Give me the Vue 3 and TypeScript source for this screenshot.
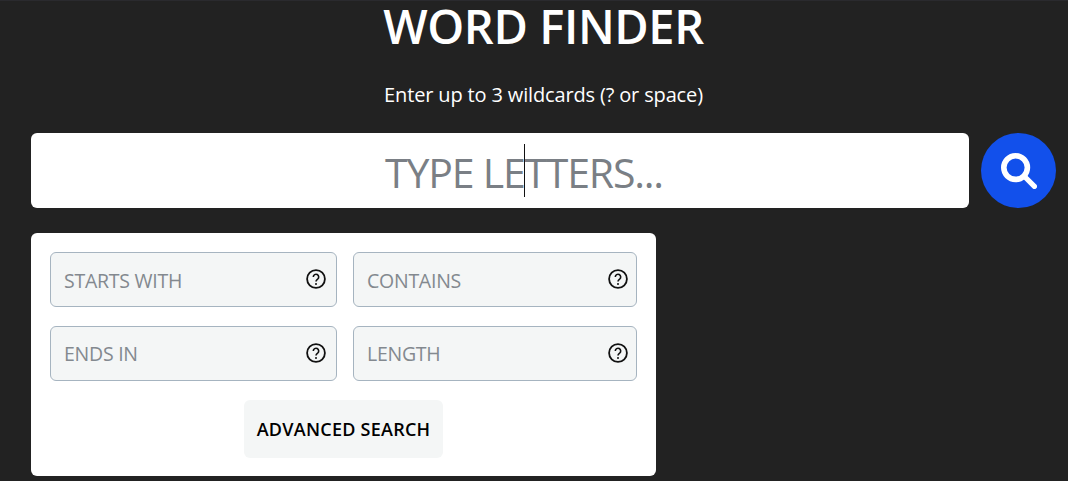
<script setup lang="ts">
const fields = ['STARTS WITH', 'CONTAINS', 'ENDS IN', 'LENGTH']
</script>

<template>
  <main class="page">
    <h1 class="title">WORD FINDER</h1>
    <p class="hint">Enter up to 3 wildcards (? or space)</p>

    <div class="search-row">
      <div class="search-box">
        <input class="search-input" type="text" placeholder="TYPE LETTERS..." />
        <span class="caret"></span>
      </div>
      <button class="search-btn" type="button" aria-label="Search">
        <svg viewBox="0 0 36 36" width="36" height="36">
          <circle cx="14.600" cy="14.600" r="11.800" fill="none" stroke="#fff" stroke-width="5.600" />
          <path d="M23.500 23.500L33.400 33.400" fill="none" stroke="#fff" stroke-width="5.200" stroke-linecap="round" />
        </svg>
      </button>
    </div>

    <section class="panel">
      <div class="field-grid">
        <div v-for="field in fields" :key="field" class="field">
          <input class="field-input" type="text" :placeholder="field" />
          <svg class="help" viewBox="0 0 20 20" width="20" height="20">
            <circle cx="10" cy="10" r="8.900" fill="none" stroke="#111" stroke-width="1.800" />
            <path d="M7.300 7.900a2.700 2.700 0 1 1 4.300 2.200c-1 .7-1.600 1.200-1.600 2.400" fill="none" stroke="#111" stroke-width="1.600" />
            <circle cx="10" cy="15" r="1" fill="#111" />
          </svg>
        </div>
      </div>
      <button class="advanced" type="button">ADVANCED SEARCH</button>
    </section>
  </main>
</template>

<style>
html,
body {
  margin: 0;
  background: #222;
}
</style>

<style scoped>
.page {
  height: 481px;
  box-sizing: border-box;
  overflow: hidden;
  padding: 0 12px 0 31px;
  font-family: "Open Sans", "Noto Sans", sans-serif;
  border-top: 1px solid #2a2a2e;
}

.title {
  margin: 0;
  height: 50px;
  line-height: 50px;
  text-align: center;
  font-size: 47px;
  font-weight: 600;
  letter-spacing: -0.400px;
  color: #fff;
}

.hint {
  margin: 30px 0 0;
  height: 28px;
  line-height: 28px;
  text-align: center;
  font-size: 20px;
  letter-spacing: -0.150px;
  color: #fff;
}

.search-row {
  display: flex;
  gap: 12px;
  margin-top: 24px;
}

.search-box {
  position: relative;
  width: 938px;
  height: 75px;
}

.search-input {
  width: 100%;
  height: 100%;
  box-sizing: border-box;
  padding: 2px 0 0 48px;
  border: 0;
  border-radius: 6px;
  background: #fff;
  text-align: center;
  font: inherit;
  font-size: 41px;
  letter-spacing: -1.200px;
  outline: none;
}

.search-input::placeholder {
  color: #7a7f85;
  opacity: 1;
}

.caret {
  position: absolute;
  left: 493px;
  top: 11px;
  width: 1px;
  height: 53px;
  background: #111;
}

.search-btn {
  width: 75px;
  height: 75px;
  padding: 0;
  border: 0;
  border-radius: 50%;
  background: #1250eb;
  display: flex;
  align-items: center;
  justify-content: center;
}

.panel {
  width: 625px;
  height: 243px;
  box-sizing: border-box;
  margin-top: 25px;
  padding: 19px 19px 0;
  border-radius: 6px;
  background: #fff;
  display: flex;
  flex-direction: column;
  align-items: center;
}

.field-grid {
  width: 100%;
  display: grid;
  grid-template-columns: 287px 284px;
  gap: 19px 16px;
}

.field {
  position: relative;
  height: 55px;
}

.field-input {
  width: 100%;
  height: 100%;
  box-sizing: border-box;
  padding: 1px 40px 0 13px;
  border: 1px solid #a6b4c0;
  border-radius: 6px;
  background: #f4f6f6;
  font: inherit;
  font-size: 19.500px;
  letter-spacing: -0.250px;
  outline: none;
}

.field:nth-child(n + 3) .field-input {
  padding-top: 0;
}

.field-input::placeholder {
  color: #83898f;
  opacity: 1;
}

.help {
  position: absolute;
  top: 17px;
  right: 9px;
}

.field:nth-child(odd) .help {
  right: 11px;
}

.advanced {
  width: 199px;
  height: 58px;
  margin-top: 19px;
  padding: 0 0 1px;
  border: 0;
  border-radius: 6px;
  background: #f4f6f6;
  color: #000;
  font: inherit;
  font-size: 18px;
  font-weight: 600;
  letter-spacing: 0.250px;
}
</style>
